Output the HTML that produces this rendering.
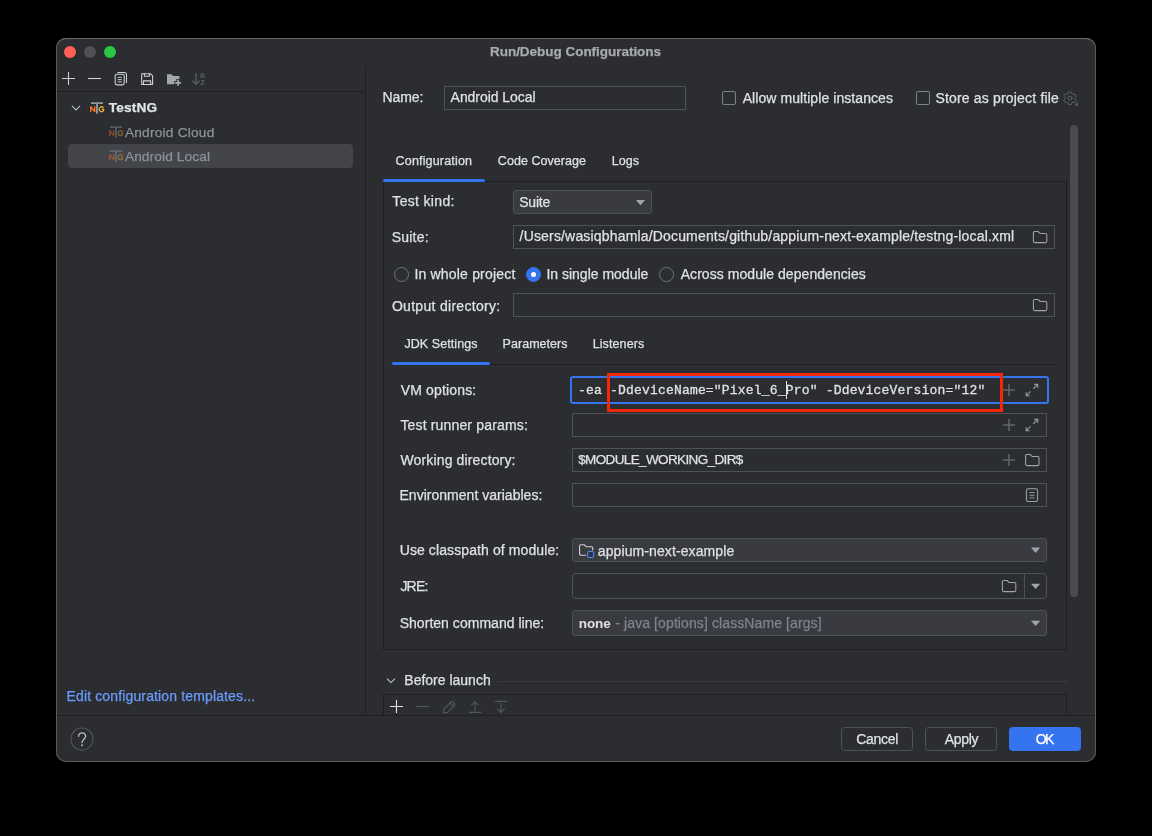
<!DOCTYPE html>
<html>
<head>
<meta charset="utf-8">
<title>Run/Debug Configurations</title>
<style>
html,body{margin:0;padding:0;background:#000;}
body{width:1152px;height:836px;overflow:hidden;position:relative;font-family:"Liberation Sans",sans-serif;font-size:13.5px;color:#DFE1E5;}
*{box-sizing:border-box;}
#root{position:absolute;left:0;top:0;width:1152px;height:836px;will-change:transform;}
.abs,.t,.fld,.dd,.ln,svg{position:absolute;}
.win{position:absolute;left:56px;top:38px;width:1040px;height:724px;background:#2B2D30;border-radius:10px;box-shadow:inset 0 1px 0 0 #68696C, inset 0 0 0 1px #5A5B5E;}
.t{white-space:pre;line-height:16px;height:16px;-webkit-text-stroke:0.25px currentColor;}
.ln{background:#1E1F22;}
.fld{border:1px solid #4E5157;background:#2B2D30;}
.dd{border:1px solid #4E5157;background:#393B40;border-radius:3px;}
.mono{font-family:"Liberation Mono",monospace;font-size:13px;letter-spacing:0.185px;-webkit-text-stroke:0.3px currentColor;}
.ul{position:absolute;height:3px;background:#3574F0;border-radius:1.5px;z-index:2;}
.cb{position:absolute;width:14px;height:14px;border:1px solid #7C8088;border-radius:2px;}
.rb{position:absolute;width:15px;height:15px;border:1px solid #6F737A;border-radius:50%;}
.btn{position:absolute;top:727px;width:72px;height:24px;border:1px solid #4E5157;border-radius:3.5px;}
</style>
</head>
<body>
<div id="root">
<div class="win"></div>

<!-- title bar -->
<div class="abs" style="left:64px;top:46px;width:12px;height:12px;border-radius:50%;background:#FF5F57;"></div>
<div class="abs" style="left:84px;top:46px;width:12px;height:12px;border-radius:50%;background:#4F5053;"></div>
<div class="abs" style="left:104px;top:46px;width:12px;height:12px;border-radius:50%;background:#28C840;"></div>

<!-- left pane -->
<div class="ln" style="left:57px;top:91px;width:309px;height:1px;"></div>
<div class="ln" style="left:365px;top:67px;width:1px;height:648px;"></div>
<div class="abs" style="left:68px;top:144px;width:285px;height:24px;background:#43454A;border-radius:4px;"></div>

<!-- bottom bar -->
<div class="ln" style="left:57px;top:715px;width:1038px;height:1px;"></div>
<div class="btn" style="left:841px;"></div>
<div class="btn" style="left:925px;"></div>
<div class="btn" style="left:1009px;background:#3574F0;border-color:#3574F0;"></div>

<!-- right pane header -->
<div class="fld" style="left:444px;top:86px;width:242px;height:24px;"></div>
<div class="cb" style="left:722px;top:91px;"></div>
<div class="cb" style="left:916px;top:91px;"></div>

<!-- scrollbar -->
<div class="abs" style="left:1070px;top:125px;width:8px;height:472px;border-radius:4px;background:#4A4B4E;"></div>

<!-- tabs -->
<div class="ul" style="left:383px;top:179px;width:102px;"></div>

<!-- config panel -->
<div class="abs" style="left:383px;top:181px;width:684px;height:469px;border:1px solid #1E1F22;"></div>

<div class="dd" style="left:513px;top:190px;width:139px;height:24px;"></div>
<div class="fld" style="left:513px;top:225px;width:542px;height:24px;"></div>

<div class="rb" style="left:393.5px;top:267px;"></div>
<div class="rb" style="left:526px;top:267px;background:#3574F0;border-color:#3574F0;"></div>
<div class="abs" style="left:531px;top:272px;width:5px;height:5px;border-radius:50%;background:#fff;"></div>
<div class="rb" style="left:659px;top:267px;"></div>

<div class="fld" style="left:513px;top:293px;width:542px;height:24px;"></div>

<!-- inner tabs -->
<div class="ln" style="left:392px;top:364px;width:666px;height:1px;"></div>
<div class="ul" style="left:392px;top:362px;width:98px;"></div>

<!-- JDK settings form -->
<div class="abs" style="left:570px;top:376px;width:479px;height:28px;border:2px solid #3574F0;border-radius:3px;"></div>
<div class="t mono" style="left:578.1px;top:382.7px;">-ea -DdeviceName="Pixel_6_Pro" -DdeviceVersion="12"</div>
<div class="abs" style="left:786px;top:381px;width:1px;height:18px;background:#DFE1E5;"></div>
<div class="abs" style="left:607px;top:373px;width:396px;height:39px;border:3px solid #F5260A;"></div>

<div class="fld" style="left:572px;top:413px;width:475px;height:24px;"></div>
<div class="fld" style="left:572px;top:448px;width:475px;height:24px;"></div>
<div class="fld" style="left:572px;top:483px;width:475px;height:24px;"></div>
<div class="dd" style="left:572px;top:538px;width:475px;height:24px;"></div>
<div class="fld" style="left:572px;top:573px;width:475px;height:26px;border-radius:4px;"></div>
<div class="abs" style="left:1024px;top:574px;width:1px;height:24px;background:#4E5157;"></div>
<div class="dd" style="left:572px;top:610px;width:475px;height:26px;"></div>

<!-- before launch -->
<div class="abs" style="left:497px;top:681px;width:570px;height:1px;background:#393B40;"></div>
<div class="abs" style="left:383px;top:694px;width:684px;height:21px;border:1px solid #1E1F22;border-bottom:none;"></div>

<div class="t" style="left:490.0px;top:44.1px;font-size:13.5px;letter-spacing:-0.03px;font-weight:bold;color:#A8AAAE;">Run/Debug Configurations</div>
<div class="t" style="left:108.8px;top:100.1px;font-size:13.7px;letter-spacing:0.15px;font-weight:bold;">TestNG</div>
<div class="t" style="left:124.9px;top:124.5px;font-size:13.7px;letter-spacing:0.22px;color:#8E9198;">Android Cloud</div>
<div class="t" style="left:124.9px;top:148.5px;font-size:13.7px;letter-spacing:0.12px;color:#8E9198;">Android Local</div>
<div class="t" style="left:66.5px;top:688.4px;font-size:14px;letter-spacing:0.14px;color:#6B9BFA;">Edit configuration templates...</div>
<div class="t" style="left:382.6px;top:89.3px;font-size:14px;letter-spacing:-0.12px;">Name:</div>
<div class="t" style="left:450.6px;top:89.3px;font-size:14px;letter-spacing:-0.05px;">Android Local</div>
<div class="t" style="left:742.7px;top:90.2px;font-size:14px;letter-spacing:0.07px;">Allow multiple instances</div>
<div class="t" style="left:935.4px;top:90.2px;font-size:14px;letter-spacing:0.18px;">Store as project file</div>
<div class="t" style="left:395.6px;top:153.2px;font-size:12.5px;letter-spacing:0.17px;">Configuration</div>
<div class="t" style="left:497.8px;top:153.2px;font-size:12.5px;letter-spacing:0.06px;">Code Coverage</div>
<div class="t" style="left:611.8px;top:153.2px;font-size:12.5px;letter-spacing:0.07px;">Logs</div>
<div class="t" style="left:392.3px;top:193.3px;font-size:14px;letter-spacing:0.33px;">Test kind:</div>
<div class="t" style="left:519.2px;top:194.2px;font-size:14px;letter-spacing:-0.20px;">Suite</div>
<div class="t" style="left:391.7px;top:229.3px;font-size:14px;letter-spacing:0.22px;">Suite:</div>
<div class="t" style="left:519.6px;top:228.4px;font-size:14px;letter-spacing:0.17px;">/Users/wasiqbhamla/Documents/github/appium-next-example/testng-local.xml</div>
<div class="t" style="left:414.4px;top:266.4px;font-size:14px;letter-spacing:0.19px;">In whole project</div>
<div class="t" style="left:546.4px;top:266.4px;font-size:14px;letter-spacing:-0.00px;">In single module</div>
<div class="t" style="left:680.7px;top:266.4px;font-size:14px;letter-spacing:0.06px;">Across module dependencies</div>
<div class="t" style="left:391.9px;top:297.9px;font-size:14px;letter-spacing:0.30px;">Output directory:</div>
<div class="t" style="left:404.4px;top:336.2px;font-size:12.5px;letter-spacing:0.08px;">JDK Settings</div>
<div class="t" style="left:502.6px;top:336.2px;font-size:12.5px;letter-spacing:0.04px;">Parameters</div>
<div class="t" style="left:592.7px;top:336.2px;font-size:12.5px;letter-spacing:0.10px;">Listeners</div>
<div class="t" style="left:400.7px;top:382.3px;font-size:14px;letter-spacing:0.16px;">VM options:</div>
<div class="t" style="left:400.4px;top:417.3px;font-size:14px;letter-spacing:0.16px;">Test runner params:</div>
<div class="t" style="left:400.5px;top:452.3px;font-size:14px;letter-spacing:0.14px;">Working directory:</div>
<div class="t" style="left:399.5px;top:487.3px;font-size:14px;letter-spacing:0.02px;">Environment variables:</div>
<div class="t" style="left:578.2px;top:452.2px;font-size:13.5px;letter-spacing:-0.63px;">$MODULE_WORKING_DIR$</div>
<div class="t" style="left:399.7px;top:542.3px;font-size:14px;letter-spacing:0.10px;">Use classpath of module:</div>
<div class="t" style="left:597.8px;top:542.9px;font-size:14px;letter-spacing:0.10px;">appium-next-example</div>
<div class="t" style="left:400.4px;top:578.1px;font-size:14px;letter-spacing:-0.79px;">JRE:</div>
<div class="t" style="left:399.7px;top:615.1px;font-size:14px;letter-spacing:0.03px;">Shorten command line:</div>
<div class="t" style="left:578.8px;top:615.5px;font-size:13.5px;letter-spacing:-0.12px;font-weight:bold;-webkit-text-stroke:0;">none</div>
<div class="t" style="left:615.3px;top:615.1px;font-size:14px;letter-spacing:0.10px;color:#7F838B;">- java [options] className [args]</div>
<div class="t" style="left:856.2px;top:731.2px;font-size:14px;letter-spacing:-0.27px;">Cancel</div>
<div class="t" style="left:944.7px;top:731.2px;font-size:14px;letter-spacing:-0.31px;">Apply</div>
<div class="t" style="left:1035.7px;top:731.2px;font-size:14px;letter-spacing:-1.48px;color:#fff;">OK</div>
<div class="t" style="left:404.3px;top:672.2px;font-size:14px;letter-spacing:0.00px;">Before launch</div>

<svg width="1152" height="836" viewBox="0 0 1152 836" style="left:0;top:0;" fill="none" stroke-linecap="round" stroke-linejoin="round">
<!-- toolbar -->
<g stroke="#CED0D6" stroke-width="1.1">
  <path d="M62 78.5H75M68.5 72V85" stroke-linecap="butt"/>
  <path d="M88 78.5H101" stroke-linecap="butt"/>
  <!-- copy -->
  <rect x="115.2" y="74.3" width="9" height="10.6" rx="1.8"/>
  <path d="M118 77.4H121.5M118 79.6H121.5M118 81.8H121.5" stroke-width="0.9"/>
  <path d="M117.8 72.5H124.6A1.9 1.9 0 0 1 126.5 74.4V82.4"/>
  <!-- save -->
  <path d="M141.7 73.8H150.5L152.6 75.9V84.5H141.7Z"/>
  <path d="M144.4 73.8V76.2H149.4V73.8M143.5 84.5V80.9H150.7V84.5"/>
</g>
<!-- folder plus -->
<path d="M167 74.3H171.6L173.2 76H179.4V79H176.3V81H174.3V84.3H167Z" fill="#A4A6AD" stroke="none"/>
<path d="M178.1 79.8V85.8M175.1 82.8H181.1" stroke="#A4A6AD" stroke-width="1.8" stroke-linecap="butt"/>
<!-- sort -->
<g stroke="#5C5F66" stroke-width="1.3">
  <path d="M195.9 73.6V84.2M192.6 81L195.9 84.4L199.2 81"/>
</g>
<text x="200.1" y="77.8" font-family="Liberation Sans" font-size="8.6" fill="#5C5F66" stroke="#5C5F66" stroke-width="0.2">a</text>
<text x="200.4" y="84.8" font-family="Liberation Sans" font-size="8.6" fill="#5C5F66" stroke="#5C5F66" stroke-width="0.2">z</text>

<!-- tree chevron -->
<path d="M72.2 106.2L76 110L79.8 106.2" stroke="#B4B8BF" stroke-width="1.1"/>
<!-- NG icons -->
<g id="ng">
  <path d="M91 103.1H103M97 103.1V113.8" stroke="#8A9AA7" stroke-width="1.9" stroke-linecap="butt"/>
  <path d="M90.7 111.9V106.3M90.8 106.7L94.6 111.5M94.7 111.9V106.3" stroke="#F8701F" stroke-width="1.4" stroke-linecap="butt"/>
  <path d="M103.5 107.9A2.3 2.5 0 1 0 103.6 110.4V109.3H101.8" stroke="#EBA935" stroke-width="1.3" stroke-linecap="butt"/>
</g>
<use href="#ng" x="19" y="24" opacity="0.42"/>
<use href="#ng" x="19" y="48" opacity="0.42"/>

<!-- gear -->
<g stroke="#5A5D63" stroke-width="1.05" transform="translate(1070 98.1) scale(0.95) translate(-1070 -98.3)">
  <path d="M1068.6 91.8h2.8l.5 1.9 1.3.75 1.9-.55 1.4 2.4-1.4 1.4v1.5l1.4 1.4-1.4 2.4-1.9-.55-1.3.75-.5 1.9h-2.8l-.5-1.9-1.3-.75-1.9.55-1.4-2.4 1.4-1.4v-1.5l-1.4-1.4 1.4-2.4 1.9.55 1.3-.75z"/>
  <circle cx="1070" cy="98.3" r="2"/>
</g>
<path d="M1078 102V105.7H1074.3Z" fill="#5A5D63"/>

<!-- dropdown arrows -->
<g fill="#A0A3A9" stroke="none">
  <path d="M635.9 200H645.1L640.5 205.2Z"/>
  <path d="M1031 547.6H1040.2L1035.6 552.9Z"/>
  <path d="M1031 583.8H1040.2L1035.6 589.1Z"/>
  <path d="M1031 620.8H1040.2L1035.6 626.1Z"/>
</g>

<!-- folder icons -->
<g stroke="#A0A3A9" stroke-width="1.05">
  <path id="fold" d="M1033.4 232.6a1.2 1.2 0 0 1 1.2-1.2h3.4l1.9 2h5.6a1.3 1.3 0 0 1 1.3 1.3v6.6a1.3 1.3 0 0 1-1.3 1.3h-10.8a1.3 1.3 0 0 1-1.3-1.3z"/>
  <use href="#fold" y="68"/>
  <use href="#fold" x="-7.8" y="223"/>
  <use href="#fold" x="-31" y="349"/>
  <!-- module folder -->
  <path d="M585.6 555.2h-4.7a1.3 1.3 0 0 1-1.3-1.3v-8a1.2 1.2 0 0 1 1.2-1.2h3.4l1.9 2h5.3a1.3 1.3 0 0 1 1.3 1.3v2" stroke="#CED0D6" stroke-width="1.15"/>
  <!-- doc icon -->
  <rect x="1026.4" y="488.8" width="11.2" height="12.8" rx="1.8"/>
  <path d="M1029.4 492.5H1034.6M1029.4 495.2H1034.6M1029.4 497.9H1034.6" stroke-width="0.9" stroke-linecap="butt"/>
</g>
<rect x="587.6" y="551.5" width="6" height="6" rx="1.6" fill="#25324D" stroke="#548AF7" stroke-width="1.1"/>

<!-- field plus / expand -->
<g stroke="#62656B" stroke-width="1.5" stroke-linecap="butt">
  <path id="fplus" d="M1003 390.1H1015M1009 384.1V396.1"/>
  <use href="#fplus" y="35"/>
  <use href="#fplus" y="70"/>
</g>
<g stroke="#979AA0" stroke-width="1.1" stroke-linecap="butt" stroke-linejoin="miter">
  <path id="fexp" d="M1033.2 388.8L1037.5 384.5M1034.2 384.4H1037.7V387.9M1030.6 391.4L1026.3 395.7M1026.2 392.3V395.8H1029.7"/>
  <use href="#fexp" y="35"/>
</g>

<!-- help -->
<circle cx="82" cy="739.1" r="11.1" stroke="#4E5056" stroke-width="1.2"/>
<path d="M78.6 736.3a3.5 3.5 0 0 1 7 0c0 2.7-3.6 3.2-3.6 6.2" stroke="#BEC0C5" stroke-width="1.3"/>
<circle cx="82" cy="745.3" r="0.95" fill="#BEC0C5"/>
<!-- before launch -->
<path d="M387.4 679L391 682.6L394.6 679" stroke="#B4B8BF" stroke-width="1.1"/>
<path d="M390 706.5H403M396.5 700V713" stroke="#DFE1E5" stroke-width="1.1" stroke-linecap="butt"/>
<g stroke="#53565C" stroke-width="1.1">
  <path d="M416 706.5H429" stroke-linecap="butt"/>
  <path d="M443.3 712.6l.6-3.4 7.2-7.2a1.5 1.5 0 0 1 2.1 0l1.3 1.3a1.5 1.5 0 0 1 0 2.1l-7.2 7.2z M450.2 703l3.4 3.4"/>
  <path d="M475 710.6V701.8M471.6 705.2L475 701.6L478.4 705.2M469.4 712.4H480.6"/>
  <path d="M501 703.2V712.3M497.6 708.9L501 712.5L504.4 708.9M495.4 701.4H506.6"/>
</g>
</svg>

</div>
</body>
</html>
